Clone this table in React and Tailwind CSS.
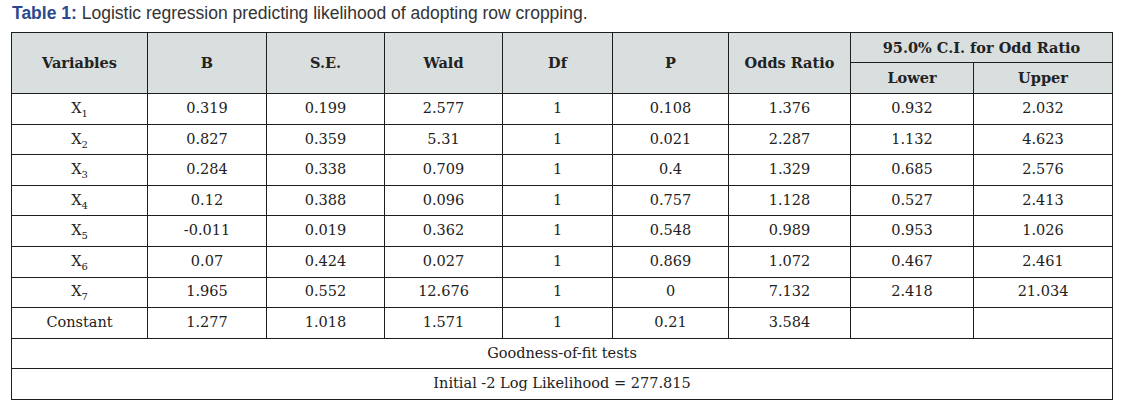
import React from "react";

const rows = [
  ["1", "0.319", "0.199", "2.577", "1", "0.108", "1.376", "0.932", "2.032"],
  ["2", "0.827", "0.359", "5.31", "1", "0.021", "2.287", "1.132", "4.623"],
  ["3", "0.284", "0.338", "0.709", "1", "0.4", "1.329", "0.685", "2.576"],
  ["4", "0.12", "0.388", "0.096", "1", "0.757", "1.128", "0.527", "2.413"],
  ["5", "-0.011", "0.019", "0.362", "1", "0.548", "0.989", "0.953", "1.026"],
  ["6", "0.07", "0.424", "0.027", "1", "0.869", "1.072", "0.467", "2.461"],
  ["7", "1.965", "0.552", "12.676", "1", "0", "7.132", "2.418", "21.034"],
];

const widths = [136, 119, 118, 118, 110, 116, 122, 123, 139];

const cell = "border border-[#1e1e1e] text-center align-middle p-0";
const head = `${cell} bg-[#d9dede] font-bold`;

export default function App() {
  return (
    <div className="w-[1134px] h-[410px] bg-white pl-[11px] pt-[2px]">
      {/* Caption */}
      <p className="font-['Liberation_Sans',Arial,sans-serif] text-[17.5px] leading-[22px] text-[#333] pl-[1px]">
        <span className="font-bold text-[#2b4a8e]">Table 1:</span> Logistic regression predicting likelihood of adopting row cropping.
      </p>

      <table className="mt-[8px] border-collapse table-fixed font-['DejaVu_Serif',serif] text-[14.5px] text-[#222]">
        <colgroup>
          {widths.map((w, i) => (
            <col key={i} style={{ width: w }} />
          ))}
        </colgroup>
        <thead>
          <tr className="h-[30px]">
            <th rowSpan={2} className={head}>Variables</th>
            <th rowSpan={2} className={head}>B</th>
            <th rowSpan={2} className={head}>S.E.</th>
            <th rowSpan={2} className={head}>Wald</th>
            <th rowSpan={2} className={head}>Df</th>
            <th rowSpan={2} className={head}>P</th>
            <th rowSpan={2} className={head}>Odds Ratio</th>
            <th colSpan={2} className={head}>95.0% C.I. for Odd Ratio</th>
          </tr>
          <tr className="h-[31px]">
            <th className={head}>Lower</th>
            <th className={head}>Upper</th>
          </tr>
        </thead>
        <tbody>
          {rows.map(([sub, ...vals]) => (
            <tr key={sub} className="h-[30.6px]">
              <td className={cell}>
                X<sub className="text-[10px] relative top-[4px]">{sub}</sub>
              </td>
              {vals.map((v, i) => (
                <td key={i} className={cell}>{v}</td>
              ))}
            </tr>
          ))}
          <tr className="h-[30.6px]">
            <td className={cell}>Constant</td>
            <td className={cell}>1.277</td>
            <td className={cell}>1.018</td>
            <td className={cell}>1.571</td>
            <td className={cell}>1</td>
            <td className={cell}>0.21</td>
            <td className={cell}>3.584</td>
            <td className={cell}></td>
            <td className={cell}></td>
          </tr>
          <tr className="h-[30.5px]">
            <td colSpan={9} className={cell}>Goodness-of-fit tests</td>
          </tr>
          <tr className="h-[30.5px]">
            <td colSpan={9} className={cell}>Initial -2 Log Likelihood = 277.815</td>
          </tr>
        </tbody>
      </table>
    </div>
  );
}
